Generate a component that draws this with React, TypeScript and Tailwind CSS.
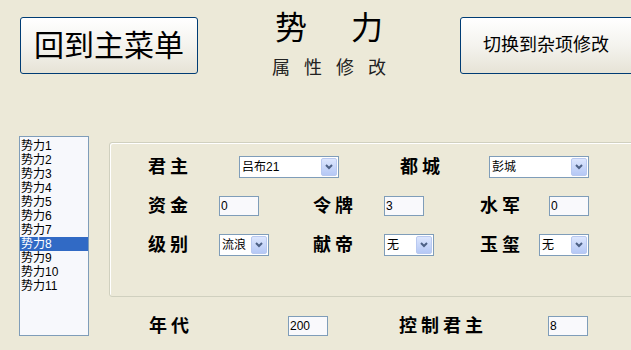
import type { ReactNode } from "react";

const factions = Array.from({ length: 11 }, (_, i) => `势力${i + 1}`);

function XpButton({ children, className }: { children: ReactNode; className: string }) {
  return (
    <button
      type="button"
      className={`flex h-[57px] shrink-0 items-center rounded-[3px] border border-[#003c74] bg-gradient-to-b from-[#ffffff] via-[#f4f3ee] to-[#e6e3d6] text-black ${className}`}
    >
      {children}
    </button>
  );
}

function Arrow() {
  return (
    <span className="flex h-[18px] w-[16px] items-center justify-center rounded-[2px] border border-[#b9c9f0] bg-gradient-to-b from-[#dce6fd] to-[#b5c8f5]">
      <svg width="8" height="6" viewBox="0 0 8 6">
        <polyline points="1,1 4,4 7,1" fill="none" stroke="#4d6185" strokeWidth="2" />
      </svg>
    </span>
  );
}

function Select({ value, width }: { value: string; width: string }) {
  return (
    <div
      className={`flex h-[22px] items-center justify-between border border-[#7f9db9] bg-white pl-[2px] pr-[1px] text-[12px] ${width}`}
    >
      <span>{value}</span>
      <Arrow />
    </div>
  );
}

function Input({ value }: { value: string }) {
  return (
    <div className="flex h-[20px] w-[40px] items-center border border-[#7f9db9] bg-[#f9f9fc] pl-[1px] text-[12px] leading-none">
      {value}
    </div>
  );
}

function Label({ children, className }: { children: ReactNode; className: string }) {
  return (
    <span className={`shrink-0 text-[18px] font-bold leading-none tracking-[4px] text-black ${className}`}>
      {children}
    </span>
  );
}

export default function App() {
  return (
    <div
      className="h-[350px] w-[631px] overflow-hidden bg-[#ece9d8] pt-[17px]"
      style={{ fontFamily: '"Liberation Sans", "Noto Sans CJK SC", sans-serif' }}
    >
      <div className="flex h-[57px] items-start">
        <XpButton className="ml-[20px] w-[178px] justify-center text-[30px]">回到主菜单</XpButton>
        <div className="-mt-[5px] flex w-[262px] shrink-0 flex-col items-center">
          <div className="flex gap-[44px] text-[32px] leading-none">
            <span>势</span>
            <span>力</span>
          </div>
          <div className="mt-[15px] pl-[14px] text-[18px] leading-none tracking-[14px] text-[#222]">属性修改</div>
        </div>
        <XpButton className="w-[180px] pl-[22px] text-[18px]">切换到杂项修改</XpButton>
      </div>

      <div className="mt-[62px] flex">
        <div className="ml-[19px] h-[200px] w-[70px] shrink-0 border border-[#7f9db9] bg-[#f7f8fc] pt-[2px] text-[12px]">
          {factions.map((f, i) => (
            <div
              key={f}
              className={`h-[14px] pl-[1px] leading-[14px] ${i === 7 ? "bg-[#316ac5] text-white" : "text-black"}`}
            >
              {f}
            </div>
          ))}
        </div>

        <div className="ml-[20px] shrink-0">
          <div className="mt-[6px] flex h-[155px] w-[560px] flex-col gap-[18px] rounded-[3px] border border-[#d0d0bf] pt-[13px] shadow-[inset_1px_1px_0_#ffffff]">
            <div className="flex h-[22px] items-center pl-[38px]">
              <Label className="w-[91px]">君主</Label>
              <Select value="吕布21" width="w-[100px]" />
              <Label className="ml-[61px] w-[89px]">都城</Label>
              <Select value="彭城" width="w-[100px]" />
            </div>
            <div className="flex h-[20px] items-center pl-[38px]">
              <Label className="w-[71px]">资金</Label>
              <Input value="0" />
              <Label className="ml-[54px] w-[71px]">令牌</Label>
              <Input value="3" />
              <Label className="ml-[56px] w-[69px]">水军</Label>
              <Input value="0" />
            </div>
            <div className="flex h-[22px] items-center pl-[38px]">
              <Label className="w-[71px]">级别</Label>
              <Select value="流浪" width="w-[50px]" />
              <Label className="ml-[44px] w-[71px]">献帝</Label>
              <Select value="无" width="w-[50px]" />
              <Label className="ml-[46px] w-[59px]">玉玺</Label>
              <Select value="无" width="w-[50px]" />
            </div>
          </div>

          <div className="mt-[19px] flex h-[20px] items-center pl-[40px]">
            <Label className="w-[139px]">年代</Label>
            <Input value="200" />
            <Label className="ml-[71px] w-[149px] tracking-[2px]">控制君主</Label>
            <Input value="8" />
          </div>
        </div>
      </div>
    </div>
  );
}
